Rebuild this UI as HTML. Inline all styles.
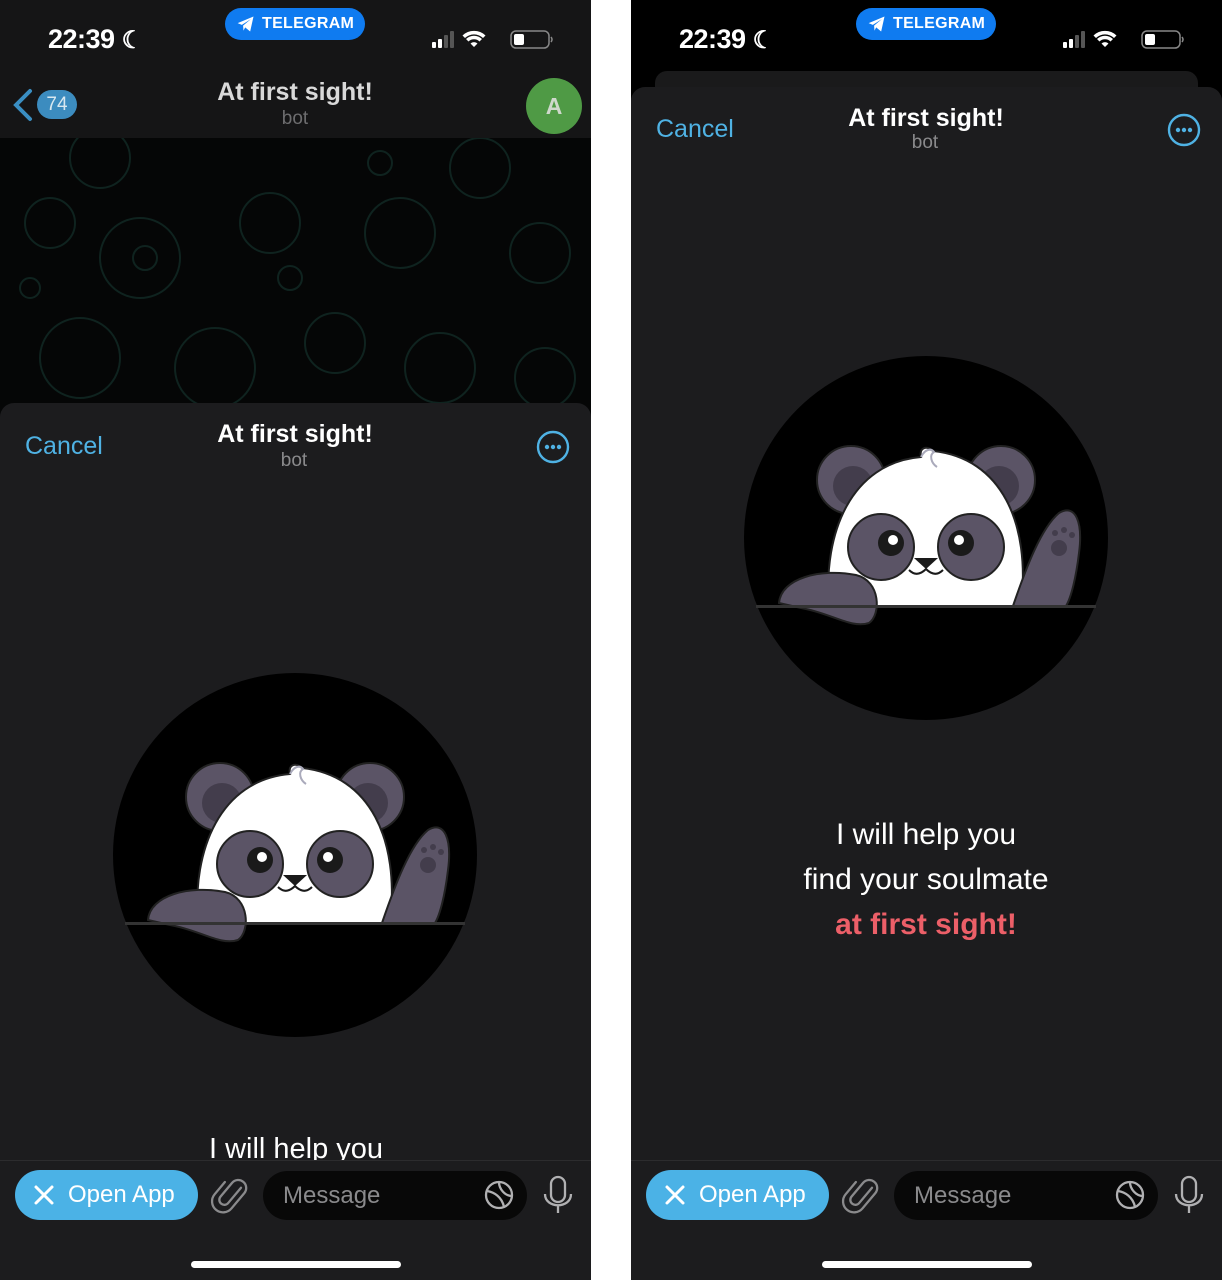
<!DOCTYPE html>
<html><head><meta charset="utf-8">
<style>
*{margin:0;padding:0;box-sizing:border-box}
html,body{width:1222px;height:1280px;overflow:hidden}
body{background:#fff;position:relative;font-family:"Liberation Sans",sans-serif}
.a{position:absolute}
.panel{position:absolute;top:0;width:591px;height:1280px;overflow:hidden}
.t{position:absolute;white-space:nowrap}
.c{transform:translateX(-50%)}
.time{font-size:27px;color:#fff;font-weight:700;letter-spacing:-0.5px}
.pill{background:#0f7bf0;border-radius:16px;height:32px;width:140px;color:#fff;font-size:16px;letter-spacing:0.3px;font-weight:600;line-height:32px;padding-left:37px}
.cancel{font-size:25px;color:#4fb2e4}
.title{font-size:25px;color:#fff;font-weight:700}
.bot{font-size:19px;color:#8a8a8c}
.bar{position:absolute;left:0;top:1160px;width:591px;height:120px;background:#1c1c1e;border-top:1px solid #2c2c2e}
.btn{position:absolute;left:15px;top:9px;width:183px;height:50px;border-radius:25px;background:#4bb2e6;color:#fff;font-size:24px;line-height:50px;padding-left:53px}
.msg{position:absolute;left:263px;top:10px;width:264px;height:49px;border-radius:25px;background:#080808;color:#8a8a8c;font-size:24px;line-height:49px;padding-left:20px}
.home{position:absolute;left:191px;top:100px;width:210px;height:7px;border-radius:4px;background:#fff}
.sheet{position:absolute;left:0;width:591px;bottom:0;background:#1c1c1e;border-radius:14px 14px 0 0}
</style></head><body>
<svg width="0" height="0" style="position:absolute">
<defs>
<symbol id="panda" viewBox="0 0 370 370">
<circle cx="185" cy="185" r="182" fill="#000"/>
<circle cx="110" cy="127" r="34" fill="#5b5466" stroke="#222" stroke-width="2"/>
<circle cx="112" cy="133" r="20" fill="#433d4c"/>
<circle cx="260" cy="127" r="34" fill="#5b5466" stroke="#222" stroke-width="2"/>
<circle cx="258" cy="133" r="20" fill="#433d4c"/>
<path d="M88 253 C82 180 110 110 180 104 C178 95 185 92 192 98 C260 105 290 170 280 253 Z" fill="#fff" stroke="#222" stroke-width="2"/>
<path d="M180 104 C184 96 190 95 193 99 C188 102 190 110 196 114" fill="none" stroke="#aab" stroke-width="2"/>
<circle cx="140" cy="194" r="33" fill="#5b5466" stroke="#222" stroke-width="2"/>
<circle cx="230" cy="194" r="33" fill="#5b5466" stroke="#222" stroke-width="2"/>
<circle cx="150" cy="190" r="13" fill="#1a1a1a"/>
<circle cx="152" cy="187" r="5" fill="#fff"/>
<circle cx="220" cy="190" r="13" fill="#1a1a1a"/>
<circle cx="218" cy="187" r="5" fill="#fff"/>
<path d="M173 205 L197 205 L185 216 Z" fill="#1a1a1a"/>
<path d="M168 217 Q176 225 185 216 Q194 225 202 217" fill="none" stroke="#1a1a1a" stroke-width="2"/>
<path d="M272 253 C285 215 300 175 318 160 C335 150 342 170 338 200 C335 225 330 245 325 253 Z" fill="#5b5466" stroke="#222" stroke-width="2"/>
<circle cx="318" cy="195" r="8" fill="#433d4c"/><circle cx="314" cy="180" r="3" fill="#433d4c"/><circle cx="323" cy="177" r="3" fill="#433d4c"/><circle cx="331" cy="182" r="3" fill="#433d4c"/>
<path d="M38 250 C40 225 80 215 115 222 C140 228 140 262 128 270 C110 276 90 260 60 255 Z" fill="#5b5466" stroke="#222" stroke-width="2"/>
<rect x="15" y="252" width="340" height="3" fill="#333"/>
</symbol>
<symbol id="more" viewBox="0 0 34 34"><circle cx="17" cy="17" r="15" fill="none" stroke="#4fb2e4" stroke-width="2.4"/><circle cx="11" cy="17" r="2.2" fill="#4fb2e4"/><circle cx="17" cy="17" r="2.2" fill="#4fb2e4"/><circle cx="23" cy="17" r="2.2" fill="#4fb2e4"/></symbol>
<symbol id="plane" viewBox="0 0 24 24"><path d="M2 11 L21 3 L17 21 L11 16 L9 20 L8.5 14 L18 6 L7 13 Z" fill="#fff"/></symbol>
<symbol id="status" viewBox="0 0 130 24">
<rect x="0" y="14" width="4" height="6" rx="1" fill="#fff"/><rect x="6" y="11" width="4" height="9" rx="1" fill="#fff"/><rect x="12" y="7" width="4" height="13" rx="1" fill="#555"/><rect x="18" y="3" width="4" height="17" rx="1" fill="#555"/>
<path d="M42 19 L38.5 15.5 A5 5 0 0 1 45.5 15.5 Z M34 11 A11.5 11.5 0 0 1 50 11 L47.5 13.5 A8 8 0 0 0 36.5 13.5 Z M30.5 7.5 A16.5 16.5 0 0 1 53.5 7.5 L51 10 A13 13 0 0 0 33 10 Z" fill="#fff"/>
<rect x="79" y="3" width="38" height="17" rx="5" fill="none" stroke="#888" stroke-width="1.5"/><rect x="82" y="6" width="10" height="11" rx="2" fill="#fff"/><path d="M119 9 Q121 11.5 119 14" stroke="#888" stroke-width="1.5" fill="none"/>
</symbol>
<symbol id="bar" viewBox="0 0 591 60">
<path d="M36 26 L52 42 M52 26 L36 42" stroke="#fff" stroke-width="3" stroke-linecap="round"/>
<g transform="translate(231 34) rotate(40)" fill="none" stroke="#8a8a8c" stroke-width="2.3" stroke-linecap="round">
<path d="M3 -12 L3 8 A5 5 0 0 1 -7 8 L-7 -10 A8 8 0 0 1 9 -10 L9 10 A11 11 0 0 1 -13 10 L-13 -6"/>
</g>
<circle cx="499" cy="34" r="13" fill="none" stroke="#b0b0b2" stroke-width="2.3"/>
<path d="M487 30 C494 31 502 36 504 46 M499 21 C499 28 505 35 512 35" fill="none" stroke="#b0b0b2" stroke-width="2.3"/>
<rect x="551" y="16" width="14" height="25" rx="7" fill="none" stroke="#b0b0b2" stroke-width="2.3"/>
<path d="M545 33 C545 48 571 48 571 33 M558 44 L558 52" fill="none" stroke="#b0b0b2" stroke-width="2.3"/>
</symbol>
</defs></svg>

<!-- LEFT PANEL -->
<div class="panel" style="left:0;background:#050606">
 <div class="a" style="left:0;top:0;width:591px;height:138px;background:#151516"></div>
 <div class="t time" style="left:48px;top:24px">22:39 <span style="font-size:24px">☾</span></div>
 <div class="a pill" style="left:225px;top:8px">TELEGRAM<svg class="a" style="left:10px;top:6px" width="22" height="20"><use href="#plane"/></svg></div>
 <svg class="a" style="left:432px;top:28px" width="130" height="24"><use href="#status"/></svg>
 <svg class="a" style="left:10px;top:88px" width="24" height="34"><path d="M20 3 L6 17 L20 31" fill="none" stroke="#3a8ec2" stroke-width="4" stroke-linecap="round"/></svg>
 <div class="a" style="left:37px;top:90px;width:40px;height:29px;border-radius:15px;background:#3c8cbf;color:#d8e8f0;font-size:19px;text-align:center;line-height:29px">74</div>
 <div class="t title c" style="left:295px;top:78px;color:#d9d9d9">At first sight!</div>
 <div class="t bot c" style="left:295px;top:108px;color:#6d6d6f">bot</div>
 <div class="a" style="left:526px;top:78px;width:56px;height:56px;border-radius:50%;background:#4f9a45;color:#cfd8cc;font-size:23px;font-weight:700;text-align:center;line-height:56px">A</div>
 <svg class="a" style="left:0;top:138px" width="591" height="268" fill="none" stroke="#0f231f" stroke-width="2">
  <circle cx="50" cy="85" r="25"/><circle cx="140" cy="120" r="40"/><circle cx="145" cy="120" r="12"/><circle cx="270" cy="85" r="30"/><circle cx="400" cy="95" r="35"/><circle cx="540" cy="115" r="30"/><circle cx="80" cy="220" r="40"/><circle cx="215" cy="230" r="40"/><circle cx="335" cy="205" r="30"/><circle cx="440" cy="230" r="35"/><circle cx="545" cy="240" r="30"/><circle cx="30" cy="150" r="10"/><circle cx="290" cy="140" r="12"/><circle cx="480" cy="30" r="30"/><circle cx="100" cy="20" r="30"/><circle cx="380" cy="25" r="12"/>
 </svg>
 <div class="sheet" style="top:403px"></div>
 <div class="t cancel" style="left:25px;top:432px">Cancel</div>
 <div class="t title c" style="left:295px;top:420px">At first sight!</div>
 <div class="t bot c" style="left:294px;top:450px">bot</div>
 <svg class="a" style="left:536px;top:430px" width="34" height="34"><use href="#more"/></svg>
 <svg class="a" style="left:110px;top:670px" width="370" height="370"><use href="#panda"/></svg>
 <div class="t c" style="left:296px;top:1133px;font-size:29px;color:#fff">I will help you</div>
 <div class="bar"><div class="btn">Open App</div><div class="msg">Message</div><svg class="a" style="left:0;top:0" width="591" height="60"><use href="#bar"/></svg><div class="home"></div></div>
</div>

<!-- RIGHT PANEL -->
<div class="panel" style="left:631px;background:#000">
 <div class="t time" style="left:48px;top:24px">22:39 <span style="font-size:24px">☾</span></div>
 <div class="a pill" style="left:225px;top:8px">TELEGRAM<svg class="a" style="left:10px;top:6px" width="22" height="20"><use href="#plane"/></svg></div>
 <svg class="a" style="left:432px;top:28px" width="130" height="24"><use href="#status"/></svg>
 <div class="a" style="left:24px;top:71px;width:543px;height:40px;border-radius:12px;background:#1a1a1b"></div>
 <div class="sheet" style="top:87px"></div>
 <div class="t cancel" style="left:25px;top:115px">Cancel</div>
 <div class="t title c" style="left:295px;top:104px">At first sight!</div>
 <div class="t bot c" style="left:294px;top:132px">bot</div>
 <svg class="a" style="left:536px;top:113px" width="34" height="34"><use href="#more"/></svg>
 <svg class="a" style="left:110px;top:353px" width="370" height="370"><use href="#panda"/></svg>
 <div class="t c" style="left:295px;top:818px;font-size:30px;color:#fff">I will help you</div>
 <div class="t c" style="left:295px;top:863px;font-size:30px;color:#fff">find your soulmate</div>
 <div class="t c" style="left:295px;top:908px;font-size:30px;color:#ec5f68;font-weight:700">at first sight!</div>
 <div class="bar"><div class="btn">Open App</div><div class="msg">Message</div><svg class="a" style="left:0;top:0" width="591" height="60"><use href="#bar"/></svg><div class="home"></div></div>
</div>
</body></html>
